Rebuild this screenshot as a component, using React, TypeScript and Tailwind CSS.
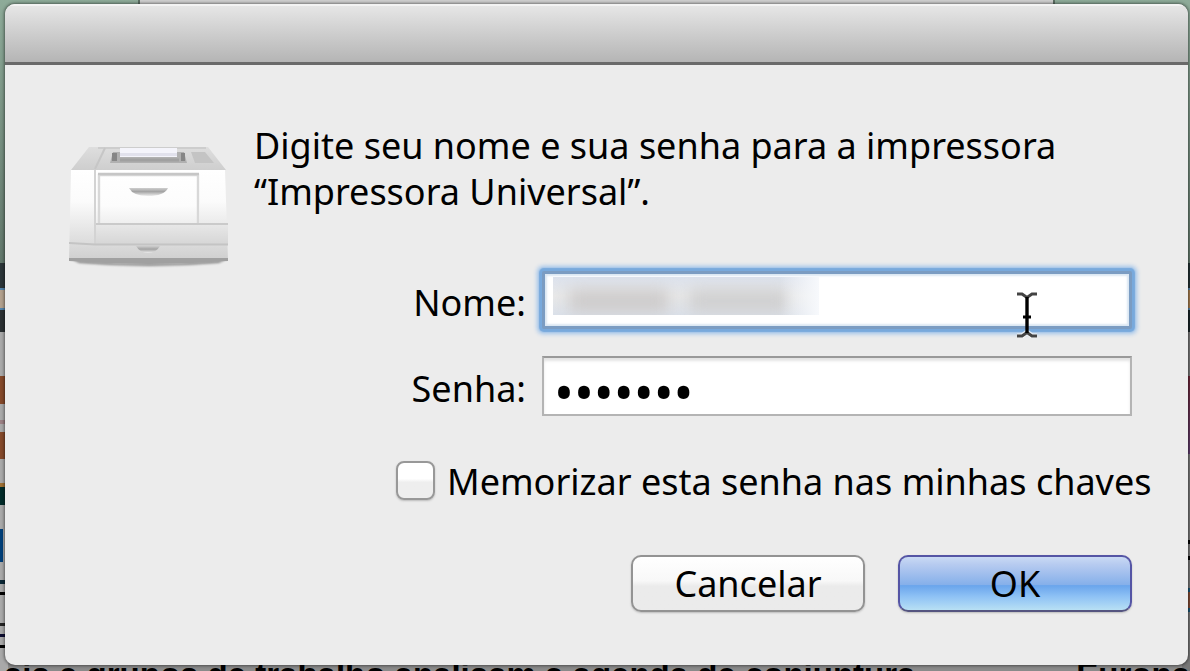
import React from "react";

function PrinterIcon() {
  return (
    <svg viewBox="0 0 160 126" className="h-[126px] w-40 shrink-0" aria-hidden="true">
      <defs>
        <linearGradient id="front" x1="0" y1="0" x2="0" y2="1">
          <stop offset="0" stopColor="#ffffff" />
          <stop offset="0.35" stopColor="#fbfbfb" />
          <stop offset="1" stopColor="#cfcfcf" />
        </linearGradient>
        <linearGradient id="door" x1="0" y1="0" x2="0" y2="1">
          <stop offset="0" stopColor="#ffffff" />
          <stop offset="0.5" stopColor="#fcfcfc" />
          <stop offset="1" stopColor="#e3e3e3" />
        </linearGradient>
        <linearGradient id="top" x1="0" y1="0" x2="0" y2="1">
          <stop offset="0" stopColor="#dedede" />
          <stop offset="1" stopColor="#cecece" />
        </linearGradient>
        <linearGradient id="tray" x1="0" y1="0" x2="0" y2="1">
          <stop offset="0" stopColor="#e8e8e8" />
          <stop offset="1" stopColor="#d6d6d6" />
        </linearGradient>
        <linearGradient id="handle" x1="0" y1="0" x2="0" y2="1">
          <stop offset="0" stopColor="#cfcfcf" />
          <stop offset="0.45" stopColor="#a3a3a3" />
          <stop offset="1" stopColor="#ededed" />
        </linearGradient>
        <filter id="soft" x="-10%" y="-200%" width="120%" height="500%">
          <feGaussianBlur stdDeviation="1.2" />
        </filter>
      </defs>
      <path d="M4 115 Q80 122 156 115 L150 118 Q80 124 10 118Z" fill="#888" filter="url(#soft)" />
      <path d="M20 2H139L157 25H2Z" fill="url(#top)" />
      <path d="M29 3H137" stroke="#cdcdcd" strokeWidth="2" />
      <path d="M36 3L26 24" stroke="#c6c6c6" strokeWidth="2" />
      <path d="M122 7H136L145 18H126Z" fill="#c4c4c4" />
      <path d="M44 7H115L118 18H41Z" fill="#b0b0b0" />
      <path d="M51 15H110" stroke="#a0a0a0" strokeWidth="3" />
      <rect x="43" y="8" width="5" height="8" fill="#868686" />
      <rect x="112" y="8" width="4" height="8" fill="#868686" />
      <rect x="51" y="3" width="57" height="9" fill="#f4f4fb" />
      <rect x="51" y="8" width="57" height="3" fill="#e1e1ec" />
      <path d="M2 25H156L159 115H0Z" fill="url(#front)" />
      <path d="M0 113H159V116Q80 122 0 116Z" fill="#a0a0a0" />
      <path d="M27 27H131V94H27Z" fill="url(#door)" />
      <path d="M30 94V30H129V94" fill="none" stroke="#d8d8d8" strokeWidth="2.4" />
      <path d="M29 29H130" stroke="#c6c6c6" strokeWidth="2.4" />
      <path d="M26 79H159V99H26Z" fill="url(#tray)" />
      <path d="M26 79H159" stroke="#cacaca" strokeWidth="2" />
      <path d="M26 25V99" stroke="#d3d3d3" strokeWidth="2" />
      <path d="M0 98L26 99.500H159" fill="none" stroke="#c4c4c4" strokeWidth="1.8" />
      <path d="M60 43H99Q95 51 79 51Q64 51 60 43Z" fill="url(#handle)" />
      <path d="M67 101H91Q87 108 79 108Q71 108 67 101Z" fill="url(#handle)" />
    </svg>
  );
}

function TextCursor() {
  return (
    <svg viewBox="0 0 22 46" className="pointer-events-none absolute top-[21px] right-[118px] h-[46px] w-[22px]" aria-hidden="true">
      <path d="M1 2H6L11 6L16 2H21M1 44H6L11 40L16 44H21" fill="none" stroke="#fff" strokeOpacity="0.7" strokeWidth="5" />
      <path d="M1 2H6L11 5.500L16 2H21M1 44H6L11 40.500L16 44H21" fill="none" stroke="#444" strokeWidth="3" />
      <path d="M11 5V41" stroke="#000" strokeWidth="3.4" />
      <path d="M7 25H15" stroke="#000" strokeWidth="3" />
    </svg>
  );
}

function Desktop() {
  return (
    <div className="absolute inset-0 flex flex-col overflow-hidden bg-[#8a8a8a]" aria-hidden="true">
      <div className="flex h-[263px] justify-center bg-linear-to-b from-[#8eab99] to-[#62776b]">
        <div className="mr-[135px] ml-[138px] h-2 flex-1 border-x-2 border-[#5c6e63] bg-[#cfcfcf]" />
      </div>
      <div className="flex flex-1 justify-between">
        <div className="flex w-2 flex-col bg-[#a9a9a9]">
          <div className="h-[25px] bg-[#2b3538]" />
          <div className="h-[22px] border-y-2 border-[#5384ab] bg-[#b2a08d]" />
          <div className="h-[22px] bg-[#2b3032]" />
          <div className="mt-11 h-7 bg-[#85492a]" />
          <div className="mt-4 h-1 bg-[#9b8084]" />
          <div className="mt-2 h-[27px] bg-[#85492a]" />
          <div className="mt-6 h-[22px] border-t-4 border-[#a17235] bg-[#022c2a]" />
          <div className="mt-6 h-[33px] w-[3px] bg-[#003e78]" />
          <div className="mt-[18px] h-1 bg-[#0b2836]" />
          <div className="mt-2 h-[3px] bg-black" />
          <div className="mt-7 h-[3px] bg-[#222]" />
          <div className="mt-2 h-[3px] bg-[#0c0c30]" />
          <div className="mt-2 h-[3px] bg-black" />
        </div>
        <div className="flex w-2 flex-col bg-[#777]">
          <div className="h-[25px] bg-[#223032]" />
          <div className="h-[22px] border-y-2 border-[#5384ab] bg-[#a57c4e]" />
          <div className="h-[22px] bg-[#182426]" />
          <div className="mt-11 h-[78px] bg-linear-to-b from-[#6b2436] to-[#5c3b6c]" />
          <div className="mt-[86px] h-1 bg-black" />
          <div className="mt-3 h-1 bg-black" />
          <div className="mt-7 h-6 border-y-4 border-[#195575] bg-[#804a34]" />
        </div>
      </div>
      <div className="absolute inset-x-0 bottom-0 flex h-[13px] justify-between overflow-hidden pl-1 font-['Liberation_Sans',sans-serif] text-[33px] leading-[33px] font-bold whitespace-nowrap text-black">
        <span>ais e grupos de trabalho analisam a agenda de conjuntura</span>
        <span>Europa</span>
      </div>
    </div>
  );
}

export default function App() {
  return (
    <div className="relative flex min-h-screen flex-col pt-1 pr-0.5 pb-1.5 pl-[5px] font-['Noto_Sans','Open_Sans',sans-serif] text-4xl text-black">
      <Desktop />
      <main
        role="dialog"
        aria-labelledby="message"
        className="relative flex flex-1 flex-col overflow-hidden rounded-[10px] bg-[#ececec] shadow-[0_0_3px_1px_rgba(0,0,0,0.45)]"
      >
        <header className="h-[61px] border-t-2 border-b-[3px] border-t-[#f3f3f3] border-b-[#6a6a6a] bg-linear-to-b from-[#e6e6e6] to-[#b5b5b5]" />
        <form className="flex flex-1 flex-col pr-8 pl-16" onSubmit={(e) => e.preventDefault()}>
          <div className="flex gap-[25px] pt-[58px]">
            <div className="pt-[22px]">
              <PrinterIcon />
            </div>
            <p id="message" className="leading-[46px]">
              Digite seu nome e sua senha para a impressora
              <br />
              “Impressora Universal”.
            </p>
          </div>

          <div className="relative flex items-center gap-4 pr-6 pl-[327px]">
            <label htmlFor="name" className="w-[130px] pt-1.5 text-right">
              Nome:
            </label>
            <div className="relative flex-1">
              <input
                id="name"
                type="text"
                className="block h-[58px] w-full rounded-[2px] border-[3px] border-[#7b9cc2] bg-white px-3 shadow-[0_0_1px_3px_#78a9dc,0_0_4px_5px_#9fc3ea,inset_0_0_2px_2px_#dbe7f3] outline-none"
              />
              <div className="pointer-events-none absolute top-1.5 left-[11px] h-[38px] w-[266px] overflow-hidden bg-linear-to-b from-[#dce2ed] via-[#e9e9e9] to-[#dbe1ea]">
                <div className="mt-3 flex gap-5 px-4 blur-[8px]">
                  <div className="h-6 w-[100px] bg-[#cdcbcb]" />
                  <div className="h-6 w-[100px] bg-[#cfcfd0]" />
                </div>
                <div className="absolute inset-y-0 right-0 w-10 bg-linear-to-r from-transparent to-[#f7f9fc]" />
              </div>
            </div>
            <TextCursor />
          </div>

          <div className="mt-[27px] flex items-center gap-4 pr-6 pl-[327px]">
            <label htmlFor="password" className="w-[130px] pt-1.5 text-right">
              Senha:
            </label>
            <input
              id="password"
              type="password"
              defaultValue="segredo"
              className="h-[60px] min-w-0 flex-1 border-2 border-[#b4b4b4] border-t-[#999] bg-white pt-2.5 pl-2.5 text-[53px] shadow-[inset_0_3px_3px_#e4e4e4] outline-none"
            />
          </div>

          <div className="mt-[42px] flex items-center gap-3 pl-[327px]">
            <input
              id="remember"
              type="checkbox"
              className="size-[39px] shrink-0 appearance-none rounded-lg border-2 border-[#989898] bg-linear-to-b from-white from-45% to-[#eeeeee] to-55% shadow-[0_1px_2px_#bbb]"
            />
            <label htmlFor="remember" className="pt-1 whitespace-nowrap">
              Memorizar esta senha nas minhas chaves
            </label>
          </div>

          <div className="mt-[53px] flex justify-end gap-[33px] pr-6">
            <button
              type="button"
              className="h-[57px] w-[234px] rounded-[10px] border-2 border-[#939393] bg-linear-to-b from-white via-[#f8f8f8] via-45% to-[#ebebeb] to-55% leading-[50px] shadow-[0_1px_2px_#bbb]"
            >
              Cancelar
            </button>
            <button
              type="submit"
              className="h-[57px] w-[234px] rounded-[10px] border-2 border-[#5555a5] border-b-[#555580] bg-[linear-gradient(#c9daf4,#b7cbf0_14%,#86b0ea_52%,#6aa5ec_54%,#8fc2f5_75%,#b8e0f4)] leading-[50px] shadow-[0_1px_2px_#bbb]"
            >
              OK
            </button>
          </div>
        </form>
      </main>
    </div>
  );
}
